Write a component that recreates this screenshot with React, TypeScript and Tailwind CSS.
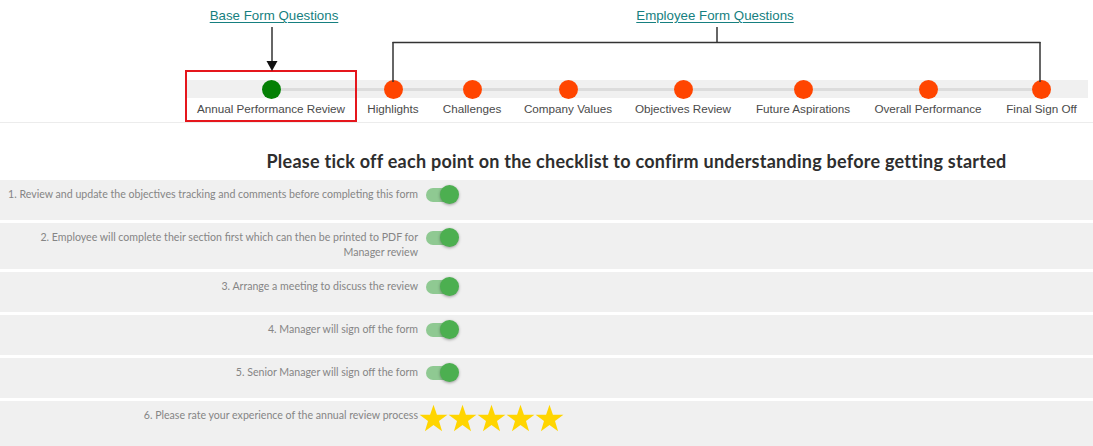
import React from "react";

const steps = [
  { label: "Annual Performance Review", w: "w-[172px]", done: true },
  { label: "Highlights", w: "w-[72px]" },
  { label: "Challenges", w: "w-[86px]" },
  { label: "Company Values", w: "w-[106px]" },
  { label: "Objectives Review", w: "w-[124px]" },
  { label: "Future Aspirations", w: "w-[116px]" },
  { label: "Overall Performance", w: "w-[134px]" },
  { label: "Final Sign Off", w: "w-[93px]" },
];

function Toggle() {
  return (
    <div className="flex items-center ml-[8px] -mt-[2px] h-[19px]">
      <div className="w-[26px] h-[14px] rounded-full bg-[#8fc992]" />
      <div className="w-[19px] h-[19px] -ml-[12px] rounded-full bg-[#4caf50] shadow-[0_1px_3px_rgba(0,0,0,0.35)]" />
    </div>
  );
}

function Star() {
  return (
    <svg width="29" height="28" viewBox="0 0 100 96" className="shrink-0">
      <polygon
        points="50,2 61.8,36.5 98,36.8 69,58.6 79.6,93.5 50,72.5 20.4,93.5 31,58.6 2,36.8 38.2,36.5"
        fill="#ffd500"
      />
    </svg>
  );
}

const rows: { text: React.ReactNode; stars?: boolean }[] = [
  { text: "1. Review and update the objectives tracking and comments before completing this form" },
  {
    text: (
      <>
        2. Employee will complete their section first which can then be printed to PDF for
        <br />
        Manager review
      </>
    ),
  },
  { text: "3. Arrange a meeting to discuss the review" },
  { text: "4. Manager will sign off the form" },
  { text: "5. Senior Manager will sign off the form" },
  { text: "6. Please rate your experience of the annual review process", stars: true },
];

export default function App() {
  return (
    <div className="w-[1093px] h-[446px] overflow-hidden bg-white font-['Liberation_Sans',Arial,sans-serif]">
      {/* annotations */}
      <div className="relative h-[70px]">
        <svg
          className="absolute left-0 top-0 overflow-visible pointer-events-none"
          width="1093"
          height="80"
        >
          <g stroke="#333" strokeWidth="1.5" fill="none">
            <line x1="272" y1="27" x2="272" y2="63" />
            <line x1="717" y1="27" x2="717" y2="42.5" />
            <line x1="392.5" y1="42.5" x2="1040.5" y2="42.5" />
            <line x1="393" y1="42" x2="393" y2="82" />
            <line x1="1040" y1="42" x2="1040" y2="82" />
          </g>
          <polygon points="266.5,61 277.5,61 272,71" fill="#111" />
        </svg>
        <div className="flex pt-[3px]">
          <div className="ml-[184px] w-[180px] text-center">
            <span className="text-[13.3px] leading-[18px] text-[#167f80] underline underline-offset-2">
              Base Form Questions
            </span>
          </div>
          <div className="ml-[251px] w-[200px] text-center">
            <span className="text-[13.3px] leading-[18px] text-[#167f80] underline underline-offset-2">
              Employee Form Questions
            </span>
          </div>
        </div>
      </div>

      {/* stepper */}
      <div className="flex ml-[185px] w-[903px]">
        {steps.map((s, i) => (
          <div
            key={s.label}
            className={`${s.w} shrink-0 flex flex-col items-center pt-[10px] ${
              i === 0 ? "outline-2 outline-[#e5161c] -outline-offset-2" : ""
            }`}
          >
            <div className="w-full h-[18px] bg-[#f0f0f0] flex items-center">
              <div className={`flex-1 h-[3px] ${i === 0 ? "" : "bg-[#dcdcdc]"}`} />
              <div
                className={`w-[19px] h-[19px] rounded-full shrink-0 ${
                  s.done ? "bg-[#058005]" : "bg-[#ff4500]"
                }`}
              />
              <div className={`flex-1 h-[3px] ${i === steps.length - 1 ? "" : "bg-[#dcdcdc]"}`} />
            </div>
            <div className="pt-[3px] pb-[5px] text-[11.7px] leading-[16px] text-[#4a4a4a] whitespace-nowrap">
              {s.label}
            </div>
          </div>
        ))}
      </div>
      <div className="h-px bg-[#ececec]" />

      {/* headline */}
      <div className="ml-[185px] w-[903px] text-center mt-[26px] mb-[7px] text-[18px] leading-[24px] font-bold text-[#2e2e2e] font-['Lato',sans-serif] tracking-[0.25px] whitespace-nowrap">
        Please tick off each point on the checklist to confirm understanding before getting started
      </div>

      {/* checklist */}
      <div className="flex flex-col gap-[3px] font-['Lato',sans-serif]">
        {rows.map((r, i) => (
          <div
            key={i}
            className={`flex items-start bg-[#f0f0f0] pt-[7px] pb-[9px] ${
              r.stars ? "min-h-[60px]" : "min-h-[40px]"
            }`}
          >
            <div className="w-[418px] shrink-0 text-right text-[10.6px] leading-[15px] text-[#858585] whitespace-nowrap">
              {r.text}
            </div>
            {r.stars ? (
              <div className="flex ml-[1px] -mt-[4px]">
                <Star />
                <Star />
                <Star />
                <Star />
                <Star />
              </div>
            ) : (
              <Toggle />
            )}
          </div>
        ))}
      </div>
    </div>
  );
}
